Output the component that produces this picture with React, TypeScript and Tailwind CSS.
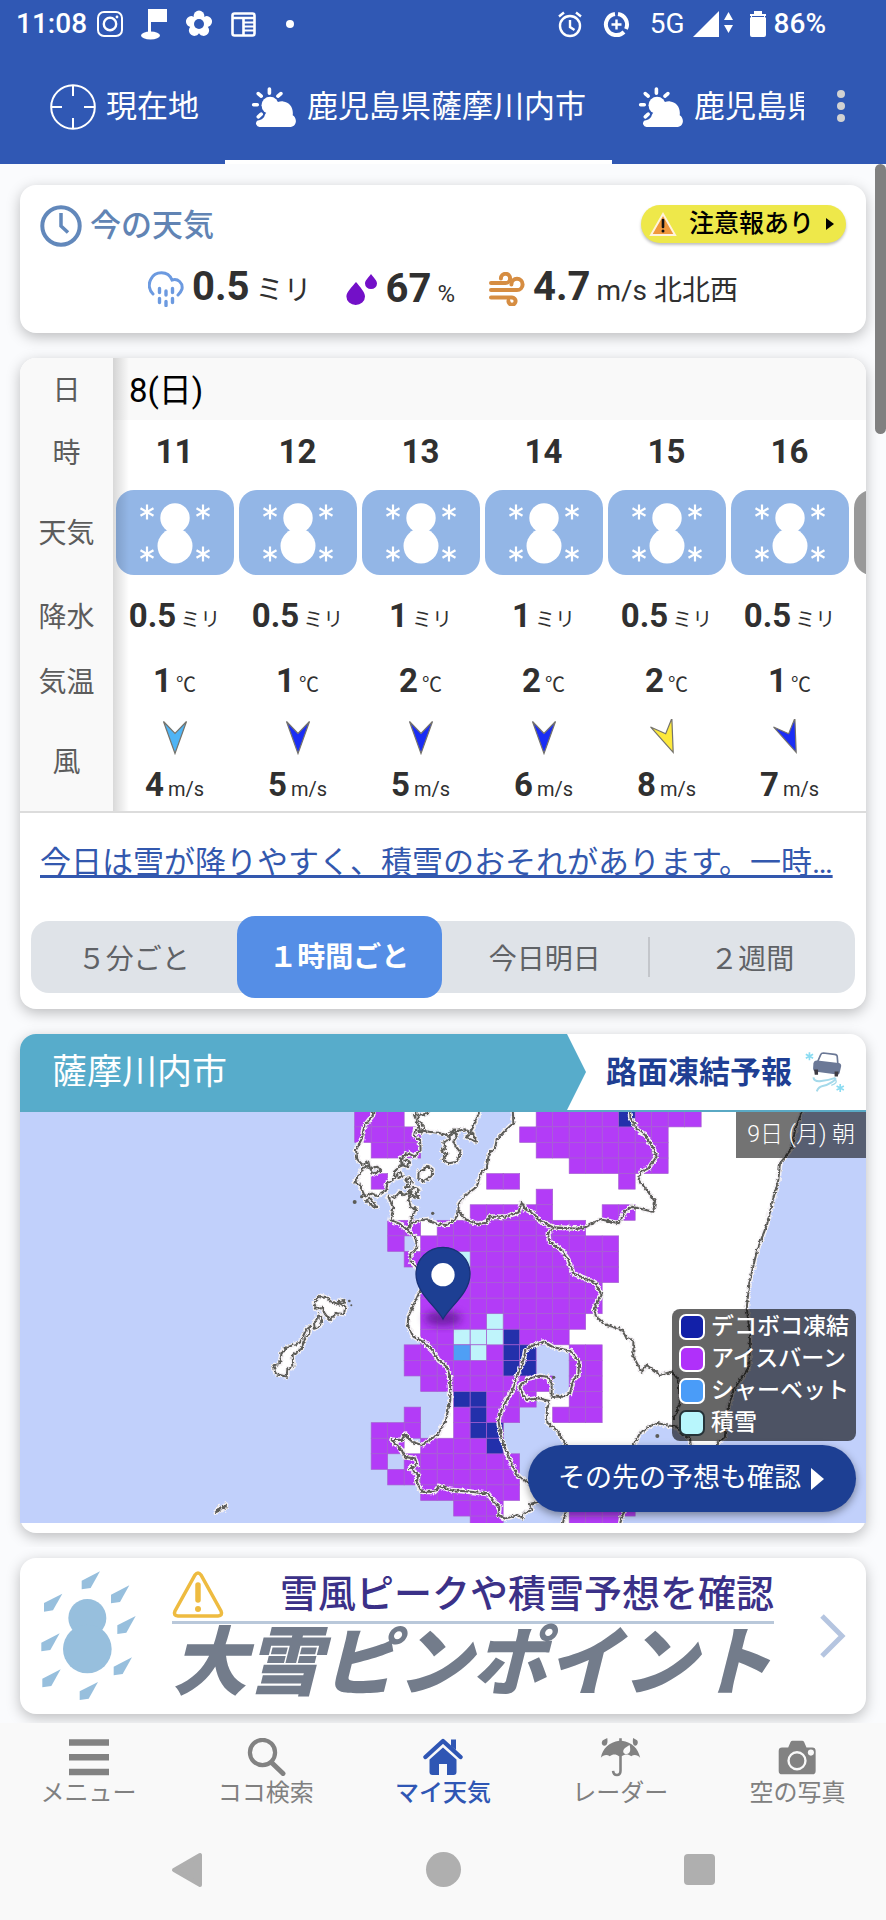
import type { ReactNode } from "react";

const hours = [
  { hour: "11", rain: "0.5", temp: "1", wind: "4", color: "#4fb4f5", angle: 0 },
  { hour: "12", rain: "0.5", temp: "1", wind: "5", color: "#1a2df5", angle: 0 },
  { hour: "13", rain: "1", temp: "2", wind: "5", color: "#1a2df5", angle: 0 },
  { hour: "14", rain: "1", temp: "2", wind: "6", color: "#1a2df5", angle: 0 },
  { hour: "15", rain: "0.5", temp: "2", wind: "8", color: "#fde93c", angle: -22 },
  { hour: "16", rain: "0.5", temp: "1", wind: "7", color: "#1a2df5", angle: -22 },
];

const ranges = ["５分ごと", "１時間ごと", "今日明日", "２週間"];

const legend = [
  { label: "デコボコ凍結", swatch: "bg-[#1220a8] border-white" },
  { label: "アイスバーン", swatch: "bg-[#b030fa] border-white" },
  { label: "シャーベット", swatch: "bg-[#4a9cf8] border-white" },
  { label: "積雪", swatch: "bg-[#b8f6fc] border-[#263338]" },
];

/* ---------- Icons ---------- */

function InstagramIcon() {
  return (
    <svg viewBox="0 0 26 26" className="size-[26px]" fill="none" stroke="#fff" strokeWidth="2">
      <rect x="1" y="1" width="24" height="24" rx="6" />
      <circle cx="13" cy="13" r="6.2" strokeWidth="2.4" />
      <circle cx="20" cy="6" r="1.4" fill="#fff" stroke="none" />
    </svg>
  );
}

function GolfIcon() {
  return (
    <svg viewBox="0 0 26 31" className="h-[31px] w-[26px]" fill="#fff">
      <path d="M7 0h19v13H10v14H7z" />
      <ellipse cx="9.500" cy="26.500" rx="9.500" ry="4" />
    </svg>
  );
}

function FlowerIcon() {
  return (
    <svg viewBox="-14 -14 28 28" className="size-[28px]" fill="#fff">
      {[0, 72, 144, 216, 288].map((a) => (
        <circle key={a} cx="0" cy="-8" r="5.400" transform={`rotate(${a})`} />
      ))}
      <circle r="8.500" />
      <circle r="5" fill="#3058b4" />
    </svg>
  );
}

function NewsIcon() {
  return (
    <svg viewBox="0 0 25 25" className="size-[25px]" fill="none" stroke="#fff" strokeWidth="2.600">
      <rect x="1.500" y="1.500" width="22" height="22" rx="2" />
      <path d="M2 6h21M12.500 7v16" />
      <path d="M13 10.500h10M13 14.500h10M13 18.500h10" strokeWidth="1.800" />
    </svg>
  );
}

function AlarmIcon() {
  return (
    <svg viewBox="0 0 26 27" className="h-[27px] w-[26px]" fill="none" stroke="#fff" strokeWidth="2.400">
      <circle cx="13" cy="15" r="10" />
      <path d="M13 9v7l4.500 3M2 5.500l5-4M24 5.500l-5-4" />
    </svg>
  );
}

function DataSaverIcon() {
  return (
    <svg viewBox="0 0 27 27" className="size-[27px]" fill="none" stroke="#fff">
      <path d="M15 3a10.600 10.600 0 0 1 8 15M21 21A10.600 10.600 0 1 1 12 3" strokeWidth="4" />
      <path d="M13.500 8.500v10M8.500 13.500h10" strokeWidth="2.400" />
    </svg>
  );
}

function SignalIcon() {
  return (
    <svg viewBox="0 0 41 26" className="h-[26px] w-[41px]" fill="#fff">
      <path d="M0 26 26 0v26zM35.500 1l4.500 8h-9zM35.500 22l4.500-8h-9z" />
    </svg>
  );
}

function BatteryIcon() {
  return (
    <svg viewBox="0 0 16 26" className="h-[26px] w-[16px]" fill="#fff">
      <path d="M4 0h8v3h4v2H0V3h4zM0 6.500h16V24a2 2 0 0 1-2 2H2a2 2 0 0 1-2-2z" />
      <path d="M1 3h14v22H1z" />
      <path d="M2 5.500h12" stroke="#3058b4" strokeWidth="1" />
    </svg>
  );
}

function CrosshairIcon() {
  return (
    <svg viewBox="0 0 46 46" className="size-[46px]" fill="none" stroke="#fff" strokeWidth="2">
      <circle cx="23" cy="23" r="21.800" />
      <path d="M23 1v11M23 34v11M1 23h11M34 23h11" />
    </svg>
  );
}

function SunCloudIcon() {
  return (
    <svg viewBox="752 256 140 128" className="h-[42px] w-[46px] shrink-0" fill="#fff">
      <g stroke="#fff" strokeWidth="11" strokeLinecap="round">
        <path d="M808 265v13M774 279l9 8M843 279l-9 8M760 313h11M774 350l9-8" />
      </g>
      <circle cx="810" cy="315" r="26" />
      <path d="M779 381a11 11 0 0 1-7-20c14-3 20-8 22-17 4-8 12-10 18-9 2-22 20-34 38-32 20 2 32 20 29 42 14 8 14 34-7 36z" />
    </svg>
  );
}

function ClockIcon() {
  return (
    <svg viewBox="0 0 42 42" className="size-[42px]" fill="none" stroke="#6288bb" strokeWidth="4">
      <circle cx="21" cy="21" r="18.700" />
      <path d="M21 8v13l7 6.500" strokeWidth="3.500" />
    </svg>
  );
}

function RainIcon() {
  return (
    <svg viewBox="0 0 36 36" className="size-9" fill="none" stroke="#6c9ae0" strokeWidth="3" strokeLinecap="round">
      <path d="M5 23C1 19 0 13 3 8 7 0 20-1 24 9c6-2 11 3 10 9-1 3-2 4-4 6" />
      <path d="M11.500 17.500v4M18 20v4M24.500 17.500v4M11.500 27.500v4M18 30.500v4M24.500 27.500v4" strokeWidth="3.400" />
    </svg>
  );
}

function DropsIcon() {
  return (
    <svg viewBox="0 0 32 32" className="size-8" fill="#7310c8">
      <path d="M10 9c4 5 9 10 9 14.500a9.300 8.500 0 0 1-18.600 0C.4 19 6 14 10 9z" />
      <path d="M25 1c3 4 6 6.500 6 9.500a6 5.600 0 0 1-12 0C19 7.500 22 5 25 1z" />
    </svg>
  );
}

function WindIcon() {
  return (
    <svg viewBox="0 0 36 34" className="h-[34px] w-9" fill="none" stroke="#d68d42" strokeWidth="4" strokeLinecap="round">
      <path d="M2 11h14.500a4.600 4.600 0 1 0-4.600-4.600" />
      <path d="M2 18h26a5.600 5.600 0 1 0-5.600-5.600" />
      <path d="M2 25.500h21a3.600 3.600 0 1 1-3.600 3.600" />
    </svg>
  );
}

function AlertIcon() {
  return (
    <svg viewBox="0 0 28 26" className="h-[26px] w-7">
      <path d="M14 3 26 24H2z" fill="#f0983c" stroke="#fff3dc" strokeWidth="2" />
      <path d="M14 9v7" stroke="#111" strokeWidth="2.600" strokeLinecap="round" />
      <circle cx="14" cy="20" r="1.500" fill="#111" />
    </svg>
  );
}

function SnowTile() {
  const flakes = [
    [31, 22],
    [87, 22],
    [31, 64],
    [87, 64],
  ];
  return (
    <svg viewBox="0 0 118 85" className="mx-auto block h-[85px] w-[118px] rounded-[18px] bg-[#93b6e6]">
      <circle cx="59" cy="28" r="14.700" fill="#fff" />
      <circle cx="59" cy="56" r="17.500" fill="#fff" />
      {flakes.map(([x, y]) => (
        <path
          key={`${x}-${y}`}
          transform={`translate(${x} ${y})`}
          d="M0-7.500v15M-6.500-3.700l13 7.400M-6.500 3.700l13-7.400"
          stroke="#fff"
          strokeWidth="2.200"
        />
      ))}
    </svg>
  );
}

function WindArrow({ color, angle }: { color: string; angle: number }) {
  return (
    <svg viewBox="-18 -18 36 36" className="mx-auto block size-9">
      <path
        transform={`rotate(${angle})`}
        d="M-11.500-15.500 0-3.500 11.500-15.500 0 16.500z"
        fill={color}
        stroke="#75736c"
        strokeWidth="1.200"
      />
    </svg>
  );
}

function SlipCarIcon() {
  return (
    <svg viewBox="606 92 126 130" className="h-[43px] w-[42px]" fill="none">
      <path d="M646 126l10-23q2-5 8-5l34 4q8 1 8 7l2 24" stroke="#6b7896" strokeWidth="5" />
      <path d="M634 128q3-8 12-7l64 7q8 1 8 9l-5 22q-2 5-8 4l-62-8q-10-2-10-10z" fill="#6b7896" />
      <path d="M636 148h12v16h-10zM698 154h12l-2 15h-10z" fill="#3d3a42" />
      <path d="M634 172q2 14 24 11t40-9q8 2-8 12t-28 12-18 16" stroke="#a4d9ea" strokeWidth="6" />
      <path d="M700 178q10 10-12 18" stroke="#a4d9ea" strokeWidth="4" />
      <g stroke="#8bdcf2" strokeWidth="5">
        <path d="M622 96v24M611 102l22 12M611 114l22-12" />
        <path d="M715 192v24M704 198l22 12M704 210l22-12" />
      </g>
    </svg>
  );
}

function SnowstormIcon() {
  const tips = [
    [298, 128],
    [185, 195],
    [386, 170],
    [405, 262],
    [177, 314],
    [394, 386],
    [180, 422],
    [292, 460],
  ];
  return (
    <svg viewBox="118 124 294 396" className="h-[132px] w-[98px] shrink-0" fill="#97bfdd">
      <circle cx="260" cy="268" r="57" />
      <circle cx="260" cy="361" r="73" />
      {tips.map(([x, y]) => (
        <path key={`${x}-${y}`} transform={`translate(${x} ${y})`} d="M0 0-28 50-55 54v-26z" />
      ))}
    </svg>
  );
}

function WarningIcon() {
  return (
    <svg viewBox="0 0 52 47" className="h-[47px] w-[52px] shrink-0" fill="none" stroke="#eebb40" strokeLinecap="round">
      <path d="M23 4q3-4 6 0l20 36q2 4.500-3 5H6q-5-.5-3-5z" strokeWidth="3.500" />
      <path d="M26 14v15" strokeWidth="5.500" />
      <circle cx="26" cy="38" r="3" fill="#eebb40" stroke="none" />
    </svg>
  );
}

function MenuIcon() {
  return (
    <svg viewBox="0 0 40 38" className="h-[38px] w-10" stroke="#828282" strokeWidth="6.500">
      <path d="M0 4.500h40M0 19.300h40M0 34.100h40" />
    </svg>
  );
}

function SearchIcon() {
  return (
    <svg viewBox="0 0 40 38" className="h-[38px] w-10" fill="none" stroke="#828282">
      <circle cx="16.500" cy="14.500" r="12.600" strokeWidth="4.200" />
      <path d="M25.500 24.500 37 35.500" strokeWidth="5" strokeLinecap="round" />
    </svg>
  );
}

function HomeIcon() {
  return (
    <svg viewBox="0 0 40 38" className="h-[38px] w-10" fill="#2f56b4">
      <path d="M2.500 19 20 3l17.500 16" fill="none" stroke="#2f56b4" strokeWidth="4.400" strokeLinecap="round" strokeLinejoin="round" />
      <path d="M28 1.500h5V12l-5-4z" />
      <path d="M6.500 21.500 20 9.500l13.500 12V34a3 3 0 0 1-3 3H24V26h-8v11H9.500a3 3 0 0 1-3-3z" />
    </svg>
  );
}

function UmbrellaIcon() {
  return (
    <svg viewBox="472 616 126 124" className="h-10 w-[41px]" fill="#828282">
      <path d="M531 620h8v8c32 4 50 24 57 52-8-8-18-12-28-4-8-8-20-8-29 0h-9c-8-8-20-8-28 0-10-8-20-4-28 4 6-28 26-48 57-52z" />
      <path d="M535 665v56q0 13-11 13t-12-13" fill="none" stroke="#828282" strokeWidth="8" />
      <path d="M494 619c2 14 0 24-9 24s-11-14-3-18zM574 619c-2 14 0 24 7 24s11-14 4-18z" />
      <path d="M563 641c5 16 1 28-9 28-12 0-14-12-5-19z" fill="#f9f9f9" />
    </svg>
  );
}

function CameraIcon() {
  return (
    <svg viewBox="1004 620 118 112" className="h-[38px] w-10" fill="#828282">
      <path d="M1019 648h18l7-16q2-4 6-4h28q4 0 6 4l7 16h17q10 0 10 10v59q0 10-10 10h-89q-10 0-10-10v-59q0-10 10-10z" />
      <circle cx="1063" cy="687" r="25" fill="none" stroke="#f9f9f9" strokeWidth="7" />
      <circle cx="1104" cy="663" r="9" fill="#f9f9f9" />
    </svg>
  );
}

/* ---------- Road freeze map ---------- */

const CELL_W = 49.5;
const CELL_H = 46.7;

// [row, first column, last column]
const iceRuns = [
  [0, 0, 2], [0, 11, 20], [1, 0, 3], [1, 10, 18], [2, 1, 3], [2, 11, 18],
  [3, 13, 18], [4, 1, 1], [4, 8, 9], [4, 16, 16], [5, 11, 11], [6, 7, 11],
  [6, 15, 16], [7, 2, 3], [7, 5, 13], [8, 2, 2], [8, 4, 15], [9, 3, 15],
  [10, 4, 15], [11, 4, 14], [12, 4, 14], [13, 4, 13], [14, 4, 12], [15, 3, 8],
  [15, 13, 14], [16, 3, 8], [16, 13, 14], [17, 4, 11], [17, 13, 14], [18, 8, 10],
  [18, 13, 14], [19, 3, 3], [19, 6, 9], [19, 12, 14], [20, 1, 3], [20, 6, 8],
  [21, 1, 2], [21, 4, 8], [22, 1, 1], [22, 3, 9], [23, 2, 9], [24, 4, 9],
  [25, 6, 8], [25, 13, 16], [26, 7, 8], [26, 13, 15],
];

// [row, column, color]
const otherCells: [number, number, string][] = [
  [0, 16, "#2330ab"], [14, 9, "#2330ab"], [15, 9, "#2330ab"], [15, 10, "#2330ab"],
  [16, 9, "#2330ab"], [16, 10, "#2330ab"], [18, 6, "#2330ab"], [18, 7, "#2330ab"],
  [19, 7, "#2330ab"], [20, 7, "#2330ab"], [20, 8, "#2330ab"], [21, 8, "#2330ab"],
  [9, 6, "#bff4fb"], [13, 8, "#bff4fb"], [14, 6, "#bff4fb"], [14, 7, "#bff4fb"],
  [14, 8, "#bff4fb"], [15, 7, "#bff4fb"], [15, 6, "#4f9ff5"],
];

const land = [
  // Kyushu
  "M518 20 520 70 495 92 470 120 465 145 447 160 440 205 425 215 410 260 372 290 356 312 355 340 345 358 320 375 290 372 262 358 235 362 210 372 203 392 225 410 232 440 222 455 210 460 212 485 230 500 246 560 225 605 205 650 203 675 220 710 250 726 275 748 295 780 320 800 330 830 331 900 318 960 292 1005 245 1035 215 1025 195 1002 185 1020 155 1020 185 1050 195 1072 225 1075 230 1095 210 1105 235 1125 230 1145 245 1175 285 1175 297 1158 330 1170 400 1176 445 1182 462 1205 478 1220 475 1245 495 1256 530 1245 548 1255 550 1240 575 1230 570 1212 600 1204 595 1170 560 1145 530 1125 512 1085 497 1050 484 1015 475 960 485 930 500 900 518 870 530 830 548 790 556 752 575 738 612 725 640 742 690 752 718 785 715 825 700 840 690 880 670 890 635 890 635 850 622 830 600 827 565 836 538 860 550 885 562 900 595 895 628 903 620 930 622 968 650 990 678 1035 700 1120 680 1220 664 1290 838 1290 845 1250 858 1225 870 1100 880 1035 900 1000 925 982 950 968 975 975 1010 980 1025 1000 1050 1015 1055 1060 1125 1060 1132 1030 1155 1010 1160 940 1180 870 1228 800 1230 700 1220 625 1228 550 1250 455 1282 370 1296 310 1315 240 1320 190 1355 145 1365 90 1380 50 1388 20z",
  // Amakusa
  "M104 20 98 46 72 80 66 115 48 150 52 178 68 195 85 185 90 205 112 200 122 212 100 222 85 196 68 205 45 245 58 252 75 290 95 280 112 288 138 272 142 250 165 235 162 215 185 195 182 175 205 160 225 170 242 150 240 120 222 108 226 88 245 98 254 84 235 60 225 20z",
  "M145 290 165 293 180 275 192 285 215 275 205 300 215 325 230 325 215 350 208 380 200 388 180 372 152 360 160 325z",
  "M222 45 262 42 262 20 425 20 412 50 400 80 390 98 372 88 352 92 330 108 295 98 265 95 240 90z",
  "M236 215 250 210 262 198 278 208 275 228 248 245 235 232z",
  "M310 128 330 118 328 105 342 88 350 110 340 124 348 140 362 158 350 185 328 190 308 178 322 162 304 152 318 142z",
  "M195 262 204 250 196 240 208 232 216 245 210 260z",
  "M206 276 222 262 238 268 226 282 236 292 218 288z",
  "M170 222 182 215 188 228 175 234z",
  "M182 198 196 178 208 184 204 202 190 196z",
  "M378 112 398 98 408 125 392 118z",
  "M78 300 92 296 112 322 98 318z",
  // Koshiki islands
  "M-78 606-60 588-40 592-28 604-5 612 16 620 12 642-12 640-30 660-45 642-55 622-72 626z",
  "M-64 640-54 658-62 680-76 686-78 668-68 660z",
  "M-102 690-90 680-92 698-108 722-115 746-142 765-140 800-158 808-160 830-192 822-200 796-180 792-176 762-164 744-120 728z",
  "M-6 606 10 600 16 606 6 612z",
  "M-372 1236-362 1222-358 1230zM-352 1224-342 1214-346 1228z",
];

const borders = [
  "M356 335 378 358 410 372 440 368 448 350 495 350 535 338 545 306 556 328 580 340 600 362 640 382 715 386 740 380 780 358 836 370 855 335 875 320 940 335 945 305 920 270 896 240 902 216 925 205 950 170 938 140 915 105 890 85 872 55 868 20",
  "M640 380 624 402 628 425 665 450 685 480 700 520 735 535 765 548 785 585 776 600 762 625 768 650 800 675 845 688 858 712 880 722 880 770 905 815 920 795 960 825 995 815 1015 838 1020 910 1000 960",
];

function FreezeMap() {
  return (
    <svg viewBox="-960 36 2538 1233" className="block w-full bg-[#c1d0fb]">
      <defs>
        <filter id="rough" x="-10%" y="-10%" width="120%" height="120%">
          <feTurbulence type="fractalNoise" baseFrequency="0.110" numOctaves="2" seed="4" />
          <feDisplacementMap in="SourceGraphic" scale="12" xChannelSelector="R" yChannelSelector="G" />
        </filter>
        <filter id="soft" x="-50%" y="-50%" width="200%" height="200%">
          <feGaussianBlur stdDeviation="12" />
        </filter>
      </defs>
      <g filter="url(#rough)" fill="#fff">
        {land.map((d) => (
          <path key={d} d={d} />
        ))}
      </g>
      <g fill="#b33cf7" stroke="#a55fd0" strokeWidth="2">
        {iceRuns.flatMap(([row, from, to]) =>
          Array.from({ length: to - from + 1 }, (_, i) => (
            <rect
              key={`${row}-${from + i}`}
              x={44 + (from + i) * CELL_W}
              y={34 + row * CELL_H}
              width={CELL_W}
              height={CELL_H}
            />
          )),
        )}
        {otherCells.map(([row, col, fill]) => (
          <rect
            key={`${row}-${col}-${fill}`}
            x={44 + col * CELL_W}
            y={34 + row * CELL_H}
            width={CELL_W}
            height={CELL_H}
            fill={fill}
          />
        ))}
      </g>
      <g filter="url(#rough)" fill="none" strokeLinejoin="round">
        <g stroke="#f4f1f4" strokeWidth="15">
          {[...land, ...borders].map((d) => (
            <path key={d} d={d} />
          ))}
        </g>
        <g stroke="#5c5c58" strokeWidth="6">
          {[...land, ...borders].map((d) => (
            <path key={d} d={d} />
          ))}
        </g>
      </g>
      <g fill="#5c5c58">
        <circle cx="278" cy="340" r="5" />
        <circle cx="641" cy="832" r="5" />
        <circle cx="952" cy="1008" r="6" />
        <circle cx="28" cy="603" r="4" />
        <circle cx="34" cy="616" r="3" />
        <circle cx="44" cy="306" r="6" />
        <circle cx="65" cy="290" r="5" />
      </g>
      {/* Pin */}
      <ellipse cx="309" cy="655" rx="56" ry="22" fill="#5d1490" opacity="0.800" filter="url(#soft)" />
      <path
        d="M309 657C290 620 228 580 228 522a81 80 0 0 1 162 0c0 58-62 98-81 135z"
        fill="#1d3f93"
        stroke="#183278"
        strokeWidth="4"
      />
      <circle cx="309" cy="524" r="35" fill="#fff" />
    </svg>
  );
}

/* ---------- Layout ---------- */

function StatusBar() {
  return (
    <div className="flex h-12 items-center pr-[60px] pl-4 text-[28px] leading-8 font-medium">
      <span>11:08</span>
      <div className="ml-[10px] flex items-center gap-[18px]">
        <InstagramIcon />
        <GolfIcon />
        <FlowerIcon />
        <NewsIcon />
        <span className="ml-3 size-2 rounded-full bg-white" />
      </div>
      <div className="ml-auto flex items-center gap-5">
        <AlarmIcon />
        <DataSaverIcon />
        <div className="flex items-center gap-2">
          <span className="font-normal">5G</span>
          <SignalIcon />
        </div>
        <div className="-ml-1 flex items-center gap-2">
          <BatteryIcon />
          <span>86%</span>
        </div>
      </div>
    </div>
  );
}

function Tab({ icon, label, active }: { icon: ReactNode; label: string; active?: boolean }) {
  return (
    <button
      type="button"
      className={`flex shrink-0 items-center gap-[10px] border-b-4 px-[26px] pt-[6px] text-[31px] whitespace-nowrap ${
        active ? "border-white" : "border-transparent"
      }`}
    >
      {icon}
      {label}
    </button>
  );
}

function CurrentValue({ icon, value, unit }: { icon: ReactNode; value: string; unit: ReactNode }) {
  return (
    <div className="flex items-center gap-2">
      {icon}
      <p className="flex items-baseline gap-[6px]">
        <b className="text-[40px] leading-10">{value}</b>
        {unit}
      </p>
    </div>
  );
}

function RowLabel({ children }: { children: ReactNode }) {
  return (
    <th
      scope="row"
      className="relative z-10 bg-[#f9f9f9] p-0 pt-1 text-[28px] font-normal text-[#5c5c5c] after:absolute after:inset-y-0 after:left-full after:w-4 after:bg-gradient-to-r after:from-black/15 after:to-transparent"
    >
      {children}
    </th>
  );
}

function Measure({ value, unit }: { value: string; unit: string }) {
  return (
    <p className="flex items-baseline justify-center gap-1 leading-9">
      <b className="text-[33px]">{value}</b>
      <span className="text-[20px]">{unit}</span>
    </p>
  );
}

function ForecastTable() {
  return (
    <table className="w-[954px] table-fixed border-collapse text-center">
      <colgroup>
        <col className="w-[93px]" />
        <col span={7} className="w-[123px]" />
      </colgroup>
      <tbody>
        <tr className="h-[62px] bg-[#f9f9f9]">
          <RowLabel>日</RowLabel>
          <td colSpan={7} className="p-0 pt-1 pl-4 text-left text-[33px] text-black">
            8(日)
          </td>
        </tr>
        <tr className="h-16">
          <RowLabel>時</RowLabel>
          {hours.map((h) => (
            <td key={h.hour} className="p-0 text-[33px] font-bold">
              {h.hour}
            </td>
          ))}
          <td />
        </tr>
        <tr className="h-24">
          <RowLabel>天気</RowLabel>
          {hours.map((h) => (
            <td key={h.hour} className="p-0">
              <SnowTile />
            </td>
          ))}
          <td className="p-0">
            <div className="mx-auto h-[85px] w-[118px] rounded-[18px] bg-[#999]" />
          </td>
        </tr>
        <tr className="h-[72px]">
          <RowLabel>降水</RowLabel>
          {hours.map((h) => (
            <td key={h.hour} className="p-0 pt-1">
              <Measure value={h.rain} unit="ミリ" />
            </td>
          ))}
          <td />
        </tr>
        <tr className="h-[58px]">
          <RowLabel>気温</RowLabel>
          {hours.map((h) => (
            <td key={h.hour} className="p-0 pt-1">
              <Measure value={h.temp} unit="℃" />
            </td>
          ))}
          <td />
        </tr>
        <tr className="h-[101px]">
          <RowLabel>風</RowLabel>
          {hours.map((h) => (
            <td key={h.hour} className="p-0 pt-1">
              <WindArrow color={h.color} angle={h.angle} />
              <div className="pt-3">
                <Measure value={h.wind} unit="m/s" />
              </div>
            </td>
          ))}
          <td />
        </tr>
      </tbody>
    </table>
  );
}

const navItems = [
  { label: "メニュー", icon: <MenuIcon /> },
  { label: "ココ検索", icon: <SearchIcon /> },
  { label: "マイ天気", icon: <HomeIcon />, active: true },
  { label: "レーダー", icon: <UmbrellaIcon /> },
  { label: "空の写真", icon: <CameraIcon /> },
];

const card = "rounded-2xl bg-white shadow-[0_4px_14px_rgba(0,0,0,0.25)]";

export default function App() {
  return (
    <div className="relative flex min-h-screen flex-col overflow-hidden bg-[#fafbfd] font-[Roboto,'Noto_Sans_CJK_JP',sans-serif] text-[#303030]">
      <header className="bg-[#3058b4] text-white">
        <StatusBar />
        <div className="flex h-[116px]">
          <div className="flex flex-1 overflow-hidden pl-6">
            <Tab icon={<CrosshairIcon />} label="現在地" />
            <Tab icon={<SunCloudIcon />} label="鹿児島県薩摩川内市" active />
            <Tab icon={<SunCloudIcon />} label="鹿児島県鹿児島市" />
          </div>
          <button type="button" aria-label="その他" className="flex w-[82px] flex-col items-center justify-center gap-1 pr-2">
            <span className="size-2 rounded-full bg-[#d2d2d2]" />
            <span className="size-2 rounded-full bg-[#d2d2d2]" />
            <span className="size-2 rounded-full bg-[#d2d2d2]" />
          </button>
        </div>
      </header>

      {/* Scroll indicator */}
      <div className="absolute top-[164px] right-0 h-[270px] w-[11px] rounded-full bg-[#808080]" />

      <main className="flex flex-1 flex-col">
        <div className="flex flex-col gap-[25px] px-5 pt-[21px] pb-[14px]">
          {/* Current weather */}
          <section className={`${card} px-5 pt-5 pb-6`}>
            <div className="flex items-start justify-between">
              <h2 className="flex items-center gap-2 text-[31px] leading-[42px] font-medium text-[#6184b4]">
                <ClockIcon />
                今の天気
              </h2>
              <button
                type="button"
                className="flex h-[38px] items-center rounded-full bg-[#eee84a] pr-3 pl-2 text-[25px] font-medium text-black shadow-[0_2px_3px_rgba(0,0,0,0.25)]"
              >
                <AlertIcon />
                <span className="mr-3 ml-3">注意報あり</span>
                <svg viewBox="0 0 8 12" className="h-3 w-2">
                  <path d="M0 0l8 6-8 6z" />
                </svg>
              </button>
            </div>
            <div className="mt-[22px] flex h-10 items-center justify-center gap-[34px] text-[28px]">
              <CurrentValue icon={<RainIcon />} value="0.5" unit="ミリ" />
              <CurrentValue icon={<DropsIcon />} value="67" unit={<span className="text-2xl">%</span>} />
              <CurrentValue icon={<WindIcon />} value="4.7" unit="m/s 北北西" />
            </div>
          </section>

          {/* Forecast */}
          <section className={`${card} pb-4`}>
            <div className="overflow-hidden rounded-t-2xl border-b-2 border-[#dcdcdc]">
              <ForecastTable />
            </div>
            <a
              href="#comment"
              className="mt-[26px] mb-[34px] block overflow-hidden px-5 text-[31px] leading-[48px] whitespace-nowrap text-[#3358ae] underline decoration-[3px] underline-offset-2"
            >
              今日は雪が降りやすく、積雪のおそれがあります。一時…
            </a>
            <div className="mx-[11px] flex h-[72px] items-center rounded-[18px] bg-[#dfe3e8] text-[28px] text-[#5f6266]">
              {ranges.map((r, i) => (
                <button
                  key={r}
                  type="button"
                  className={
                    i === 1
                      ? "h-[82px] flex-1 rounded-[18px] bg-[#558ee6] pt-[2px] font-bold text-white"
                      : i === 3
                        ? "h-10 flex-1 border-l-2 border-[#c3c6cb] pt-[2px]"
                        : "h-10 flex-1 pt-[2px]"
                  }
                >
                  {r}
                </button>
              ))}
            </div>
          </section>

          {/* Road freeze forecast */}
          <section className={`${card} pb-[10px]`}>
            <div className="flex h-[78px] overflow-hidden rounded-t-2xl border-b-2 border-[#5aa9c4]">
              <h2 className="flex flex-1 items-center bg-[#57accb] pt-[2px] pl-8 text-[35px] text-white">薩摩川内市</h2>
              <svg viewBox="0 0 19 76" preserveAspectRatio="none" className="h-full w-[19px]">
                <path d="M0 0l19 38-19 38z" fill="#57accb" />
              </svg>
              <div className="flex items-center gap-3 pr-5 pl-5">
                <span className="pt-[2px] text-[31px] font-bold text-[#1f3f93]">路面凍結予報</span>
                <SlipCarIcon />
              </div>
            </div>
            <div className="relative">
              <FreezeMap />
              <p className="absolute top-0 right-0 bg-black/55 px-[11px] py-[5px] text-[23px] leading-9 font-light text-white">
                9日 (月) 朝
              </p>
              <div className="absolute right-[10px] bottom-[11px] flex flex-col items-end gap-1">
                <ul className="rounded-lg bg-black/60 px-[7px] py-[2px] text-[23px] leading-8 font-medium text-white">
                  {legend.map((l) => (
                    <li key={l.label} className="flex items-center gap-[6px]">
                      <span className={`size-[26px] rounded-[7px] border-2 ${l.swatch}`} />
                      {l.label}
                    </li>
                  ))}
                </ul>
                <button
                  type="button"
                  className="flex h-[67px] items-center gap-[10px] rounded-full bg-[#1d3f93] pr-8 pl-[30px] text-[27px] text-white shadow-[0_3px_8px_rgba(0,0,0,0.4)]"
                >
                  その先の予想も確認
                  <svg viewBox="0 0 13 22" className="h-[22px] w-[13px]" fill="#fff">
                    <path d="M0 0l13 11L0 22z" />
                  </svg>
                </button>
              </div>
            </div>
          </section>
        </div>

        {/* Heavy snow banner */}
        <div className="relative bg-[#fafbfd] px-5 pt-[11px] pb-[9px]">
          <a href="#snow" className={`${card} flex h-[156px] items-center px-5`}>
            <SnowstormIcon />
            <div className="ml-[34px] min-w-0 flex-1">
              <div className="flex items-center border-b-[3px] border-[#b9c8da] pb-[3px]">
                <WarningIcon />
                <span className="flex-1 text-right text-[38px] leading-[47px] font-medium whitespace-nowrap text-[#3b3188]">
                  雪風ピークや積雪予想を確認
                </span>
              </div>
              <p className="text-[75px] leading-[78px] font-black whitespace-nowrap text-[#737c8b] italic">
                大雪ピンポイント
              </p>
            </div>
            <svg viewBox="0 0 26 44" className="ml-[46px] h-11 w-[26px] shrink-0" fill="none" stroke="#b5c5e0" strokeWidth="5">
              <path d="M2 2l20 20L2 42" />
            </svg>
          </a>
        </div>
      </main>

      <footer className="relative bg-[#f9f9f9]">
        <nav className="grid grid-cols-5 pt-[14px]">
          {navItems.map((n) => (
            <a
              key={n.label}
              href="#"
              className={`flex flex-col items-center text-[24px] leading-8 ${
                n.active ? "font-medium text-[#2f56b4]" : "text-[#808080]"
              }`}
            >
              <span className="flex h-10 items-center">{n.icon}</span>
              {n.label}
            </a>
          ))}
        </nav>
        <div className="grid h-[111px] grid-cols-3 items-center px-[59px] pt-[10px]">
          <button type="button" aria-label="戻る" className="flex justify-center">
            <svg viewBox="0 0 32 36" className="h-9 w-8" fill="#afafaf" stroke="#afafaf" strokeWidth="4" strokeLinejoin="round">
              <path d="M29 3v30L3 18z" />
            </svg>
          </button>
          <button type="button" aria-label="ホーム" className="mx-auto size-[35px] rounded-full bg-[#afafaf]" />
          <button type="button" aria-label="アプリ履歴" className="mx-auto size-[31px] rounded bg-[#afafaf]" />
        </div>
      </footer>
    </div>
  );
}
